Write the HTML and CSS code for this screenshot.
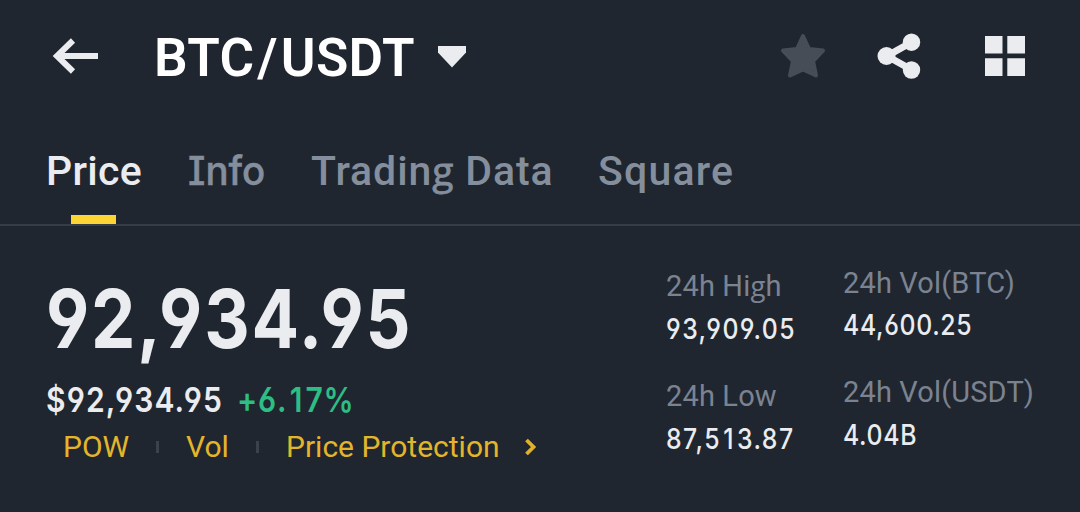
FILE: index.html
```html
<!DOCTYPE html>
<html lang="en">
<head>
<meta charset="utf-8">
<title>BTC/USDT</title>
<link rel="stylesheet" href="styles.css">
</head>
<body>
<header class="topbar">
  <svg class="back" width="48" height="38" viewBox="0 0 48 38"><path d="M21 3.500 5 19 21 34.500M5 19H46" fill="none" stroke="#eaecef" stroke-width="6"/></svg>
  <h1 class="pair">BTC<span class="slash">/</span>USDT</h1>
  <svg class="caret" width="28" height="22" viewBox="0 0 28 22"><path d="M0 0H28V6.500L14 21.500 0 6.500Z" fill="#eaecef"/></svg>
  <div class="actions">
    <svg width="46" height="48" viewBox="0 0 46 48"><path d="M23 4 29 17 43 18.500 33 29 36 43.500 23 37.500 10 43.500 13 29 3 18.500 17 17Z" fill="#474d57" stroke="#474d57" stroke-width="4" stroke-linejoin="round"/></svg>
    <svg class="share" width="44" height="48" viewBox="0 0 44 48"><path d="M35 10 10 24 35 38" fill="none" stroke="#eaecef" stroke-width="7"/><g fill="#eaecef"><circle cx="9.500" cy="24" r="9"/><circle cx="34.500" cy="10.200" r="8.700"/><circle cx="34.500" cy="38" r="8.700"/></g></svg>
    <svg class="grid" width="40" height="40" viewBox="0 0 40 40"><path d="M0 0H17.500V17.500H0ZM22.300 0H40V17.500H22.300ZM0 22.300H17.500V40H0ZM22.300 22.300H40V40H22.300Z" fill="#eaecef"/></svg>
  </div>
</header>
<nav class="tabs">
  <a class="tab tab-price active">Price</a>
  <a class="tab tab-info"><span class="serif-i">Info</span></a>
  <a class="tab tab-data">Tradin<span class="loop-g">g</span> Data</a>
  <a class="tab tab-square">Square</a>
</nav>
<main class="ticker">
  <section class="quote">
    <div class="last"><span class="num">92,934.95</span></div>
    <div class="fiat"><span class="num usd">$92,934.95</span><span class="num change">+6.<span class="one">1</span>7%</span></div>
    <div class="tags">
      <span class="tag-pow">POW</span><i class="sep"></i><span class="tag-vol">Vol</span><i class="sep"></i><span class="tag-protect">Price Protection</span>
      <svg class="chevron" width="14" height="18" viewBox="0 0 14 18"><path d="M2.500 2 9.500 9 2.500 16" fill="none" stroke="#dfb22c" stroke-width="3.800"/></svg>
    </div>
  </section>
  <section class="stats">
    <div class="stat"><div class="label">24h Hi<span class="loop-g light">g</span>h</div><div class="value"><span class="num">93,909.05</span></div></div>
    <div class="stat"><div class="label">24h Low</div><div class="value"><span class="num">87,5<span class="one">1</span>3.87</span></div></div>
  </section>
  <section class="stats volumes">
    <div class="stat"><div class="label">24h Vol(BTC)</div><div class="value"><span class="num">44,600.25</span></div></div>
    <div class="stat"><div class="label">24h Vol(USDT)</div><div class="value"><span class="num">4.04B</span></div></div>
  </section>
</main>
</body>
</html>
```
FILE: styles.css
```css
* { box-sizing: border-box; }
body { margin: 0; height: 512px; overflow: hidden; background: #20262f; color: #eaecef; font-family: Roboto, "Liberation Sans", sans-serif; white-space: nowrap; }
svg { display: block; flex: none; }

.topbar { display: flex; align-items: center; height: 117px; padding: 0 55px 0 52px; }
.back { margin-top: -5px; }
.pair { width: 282px; margin: 0 0 0 54px; font-size: 53px; font-weight: 600; letter-spacing: .3px; line-height: 117px; color: #fff; }
.slash { margin: 0 3px; }
.caret { margin: -4px 0 0 2px; }
.actions { display: flex; align-items: center; margin: -5px 0 0 auto; }
.share { margin-left: 51px; }
.grid { margin-left: 64px; }

.tabs { display: flex; height: 109px; padding-left: 46px; border-bottom: 2px solid #353c46; font-size: 41px; font-weight: 500; line-height: 108px; color: #848e9c; }
.tab { position: relative; }
.tab-price { width: 142px; letter-spacing: .3px; }
.tab-info { width: 123px; }
.tab-data { width: 287px; letter-spacing: .9px; }
.tab-square { letter-spacing: 1.2px; }
.active { color: #eaecef; }
.active::after { content: ""; position: absolute; left: 25px; bottom: 0; width: 45px; height: 9px; background: #fcd535; }
.serif-i { display: inline-block; font-family: Inter, sans-serif; font-size: 40px; font-feature-settings: "cv08"; transform: scaleX(.96); transform-origin: left; -webkit-text-stroke: .5px currentColor; }
.loop-g { font-family: "Open Sans", sans-serif; font-size: .95em; line-height: 1; -webkit-text-stroke: .8px currentColor; }
.loop-g.light { -webkit-text-stroke: 0; }

.num { display: inline-block; font-family: Inter, sans-serif; font-feature-settings: "cv03", "cv04"; transform: scaleX(.87); transform-origin: left; }
.one { padding: 0 2.500px; }

.ticker { display: flex; }
.quote { width: 666px; padding: 43px 0 0 46px; }
.last { height: 101px; font-size: 81px; font-weight: 700; line-height: 101px; }
.last .num { letter-spacing: 2.100px; }
.fiat { display: flex; height: 61px; margin-top: -1px; font-size: 34.500px; font-weight: 600; line-height: 61px; }
.usd { width: 191px; letter-spacing: 1.300px; }
.change { color: #2ebd85; letter-spacing: 1px; }
.tags { display: flex; align-items: center; height: 36px; margin-top: -1px; padding-left: 17px; font-size: 30px; line-height: 36px; color: #e3b52b; }
.tag-pow { width: 93px; }
.tag-vol { width: 70px; margin-left: 27px; }
.tag-protect { width: 238px; margin-left: 27px; }
.sep { width: 3px; height: 12px; background: #3b424d; }

.stats { width: 177px; padding-top: 38px; }
.volumes { padding-top: 35px; }
.stat { height: 110px; }
.label { height: 43px; font-size: 29px; line-height: 44px; letter-spacing: .15px; color: #7b8391; }
.value { height: 43px; font-size: 28.500px; font-weight: 500; line-height: 43px; }
.value .num { letter-spacing: 1.650px; }
.volumes .stat { height: 109px; }
.volumes .label { height: 42px; }
.volumes .value .num { letter-spacing: .75px; }
.volumes .stat:last-child .label { height: 43px; }
```
